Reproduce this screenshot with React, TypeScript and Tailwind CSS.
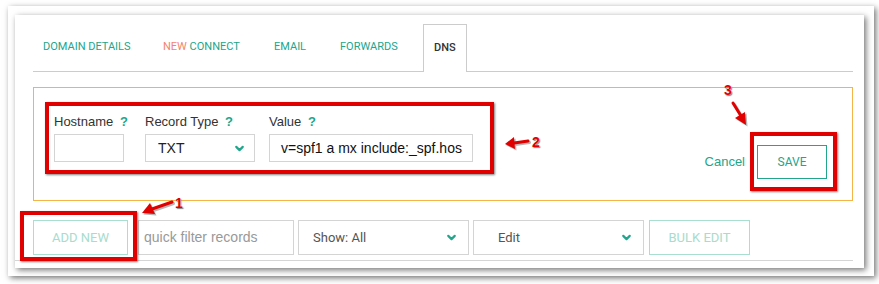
import React from 'react'
import { ChevronDown } from 'lucide-react'

const din = { fontFamily: 'Roboto, "Liberation Sans", sans-serif' }
const arial = { fontFamily: '"Liberation Sans", Arial, sans-serif' }

const Help = () => <span className="ml-[3px] font-bold text-[#21a58b]">?</span>

const Arrow = ({ d, head }: { d: string; head: string }) => (
  <g>
    <g transform="translate(1.5,1.5)" opacity="0.35">
      <path d={d} stroke="#333" strokeWidth="3" fill="none" strokeLinecap="round" />
      <polygon points={head} fill="#333" />
    </g>
    <path d={d} stroke="#e00000" strokeWidth="3" fill="none" strokeLinecap="round" />
    <polygon points={head} fill="#e00000" />
  </g>
)

const Num = ({ n, className }: { n: string; className: string }) => (
  <span
    className={`absolute text-[14px] font-bold leading-none text-[#e00000] [text-shadow:0_0_1px_#fff,1px_1px_1px_#777] ${className}`}
    style={arial}
  >
    {n}
  </span>
)

export default function App() {
  const tabs = [
    { label: 'DOMAIN DETAILS', w: 'w-[120px]' },
    { label: 'NEW CONNECT', w: 'w-[111px]' },
    { label: 'EMAIL', w: 'w-[66px]' },
    { label: 'FORWARDS', w: 'w-[93px]' },
  ]

  return (
    <div className="relative w-[879px] h-[284px] overflow-hidden bg-white">
      {/* outer frame */}
      <div className="mt-[6px] ml-[8px] w-[866px] h-[270px] bg-white shadow-[2px_2px_6px_rgba(0,0,0,0.55)] pt-[9px] pl-[7px]">
        {/* panel */}
        <div className="w-[849px] h-[253px] bg-white shadow-[2px_2px_6px_rgba(0,0,0,0.55)] pt-[9px] pl-[18px] pr-[11px]">
          {/* tabs */}
          <div className="flex items-end h-[48px] border-b border-[#cccccc]" style={din}>
            {tabs.map((t) => (
              <div key={t.label} className={`${t.w} h-[47px] flex items-center pl-[10px] text-[11px] text-[#21a58b]`}>
                {t.label === 'NEW CONNECT' ? (
                  <span>
                    <span className="text-[#f4836e]">NEW</span> CONNECT
                  </span>
                ) : (
                  t.label
                )}
              </div>
            ))}
            <div className="w-[44px] h-[48px] -mb-px flex items-center pl-[10px] text-[11px] font-medium text-[#333] bg-white border border-b-0 border-[#cccccc]">
              DNS
            </div>
          </div>

          {/* edit record box */}
          <div className="mt-[15px] h-[114px] border border-[#f5b447] flex justify-between pl-[20px] pr-[25px] pt-[26px]">
            <div className="flex" style={arial}>
              <div className="flex flex-col w-[70px]">
                <label className="text-[13px] leading-[15px] text-[#333] whitespace-nowrap">
                  Hostname <Help />
                </label>
                <div className="mt-[5px] w-[70px] h-[28px] border border-[#d4d4d4]" />
              </div>
              <div className="flex flex-col w-[110px] ml-[21px]">
                <label className="text-[13px] leading-[15px] text-[#333] whitespace-nowrap">
                  Record Type <Help />
                </label>
                <div className="mt-[5px] w-[110px] h-[28px] border border-[#d4d4d4] flex items-center justify-between pl-[12px] pr-[8px] text-[14px] text-[#222]">
                  TXT
                  <ChevronDown size={13} strokeWidth={4} className="text-[#21a58b]" />
                </div>
              </div>
              <div className="flex flex-col w-[204px] ml-[14px]">
                <label className="text-[13px] leading-[15px] text-[#333] whitespace-nowrap">
                  Value <Help />
                </label>
                <div className="mt-[5px] w-[204px] h-[28px] border border-[#d4d4d4] flex items-center pl-[11px] text-[14px] text-[#111] overflow-hidden whitespace-nowrap">
                  v=spf1 a mx include:_spf.hos
                </div>
              </div>
            </div>
            <div className="flex items-center gap-[12px] mt-[31px] self-start">
              <span className="text-[13px] text-[#21a58b]" style={arial}>
                Cancel
              </span>
              <button
                className="w-[70px] h-[34px] border border-[#21a58b] text-[12px] text-[#21a58b]"
                style={din}
              >
                SAVE
              </button>
            </div>
          </div>

          {/* toolbar */}
          <div className="mt-[19px] flex h-[35px]" style={din}>
            <button className="w-[95px] h-full border border-[#a8dfcf] text-[13px] text-[#a8dccd]">ADD NEW</button>
            <div
              className="ml-[10px] w-[156px] h-full border border-[#d4d4d4] flex items-center pl-[5px] text-[14px] text-[#999]"
              style={arial}
            >
              quick filter records
            </div>
            <div className="ml-[4px] w-[171px] h-full border border-[#d4d4d4] flex items-center justify-between pl-[14px] pr-[10px] text-[13px] text-[#555]">
              Show: All
              <ChevronDown size={13} strokeWidth={4} className="text-[#21a58b]" />
            </div>
            <div className="ml-[4px] w-[171px] h-full border border-[#d4d4d4] flex items-center justify-between pl-[24px] pr-[10px] text-[13px] text-[#555]">
              Edit
              <ChevronDown size={13} strokeWidth={4} className="text-[#21a58b]" />
            </div>
            <button className="ml-[5px] w-[101px] h-full border border-[#a8dfcf] text-[13px] text-[#a8dccd]">BULK EDIT</button>
          </div>
          <div className="mt-[5px] -ml-[18px] h-px bg-[#d5d5d5]" />
        </div>
      </div>

      {/* annotations */}
      <div className="absolute left-[20px] top-[211px] w-[117px] h-[50px] border-[4px] border-[#e00000] shadow-[1px_1px_2px_rgba(0,0,0,0.5)]" />
      <div className="absolute left-[45px] top-[102px] w-[449px] h-[72px] border-[4px] border-[#e00000] shadow-[1px_1px_2px_rgba(0,0,0,0.5)]" />
      <div className="absolute left-[750px] top-[132px] w-[87px] h-[59px] border-[4px] border-[#e00000] shadow-[1px_1px_2px_rgba(0,0,0,0.5)]" />

      <svg className="absolute inset-0 pointer-events-none" width="879" height="284">
        <Arrow d="M172 202 L152 209" head="142,213 150,203 155,214" />
        <Arrow d="M528 141 L514 143" head="505,144 514,137 515,149" />
        <Arrow d="M733 103 L741 116" head="746,125 735,118 745,112" />
      </svg>
      <Num n="1" className="left-[175px] top-[196px]" />
      <Num n="2" className="left-[532px] top-[135px]" />
      <Num n="3" className="left-[724px] top-[83px]" />
    </div>
  )
}
